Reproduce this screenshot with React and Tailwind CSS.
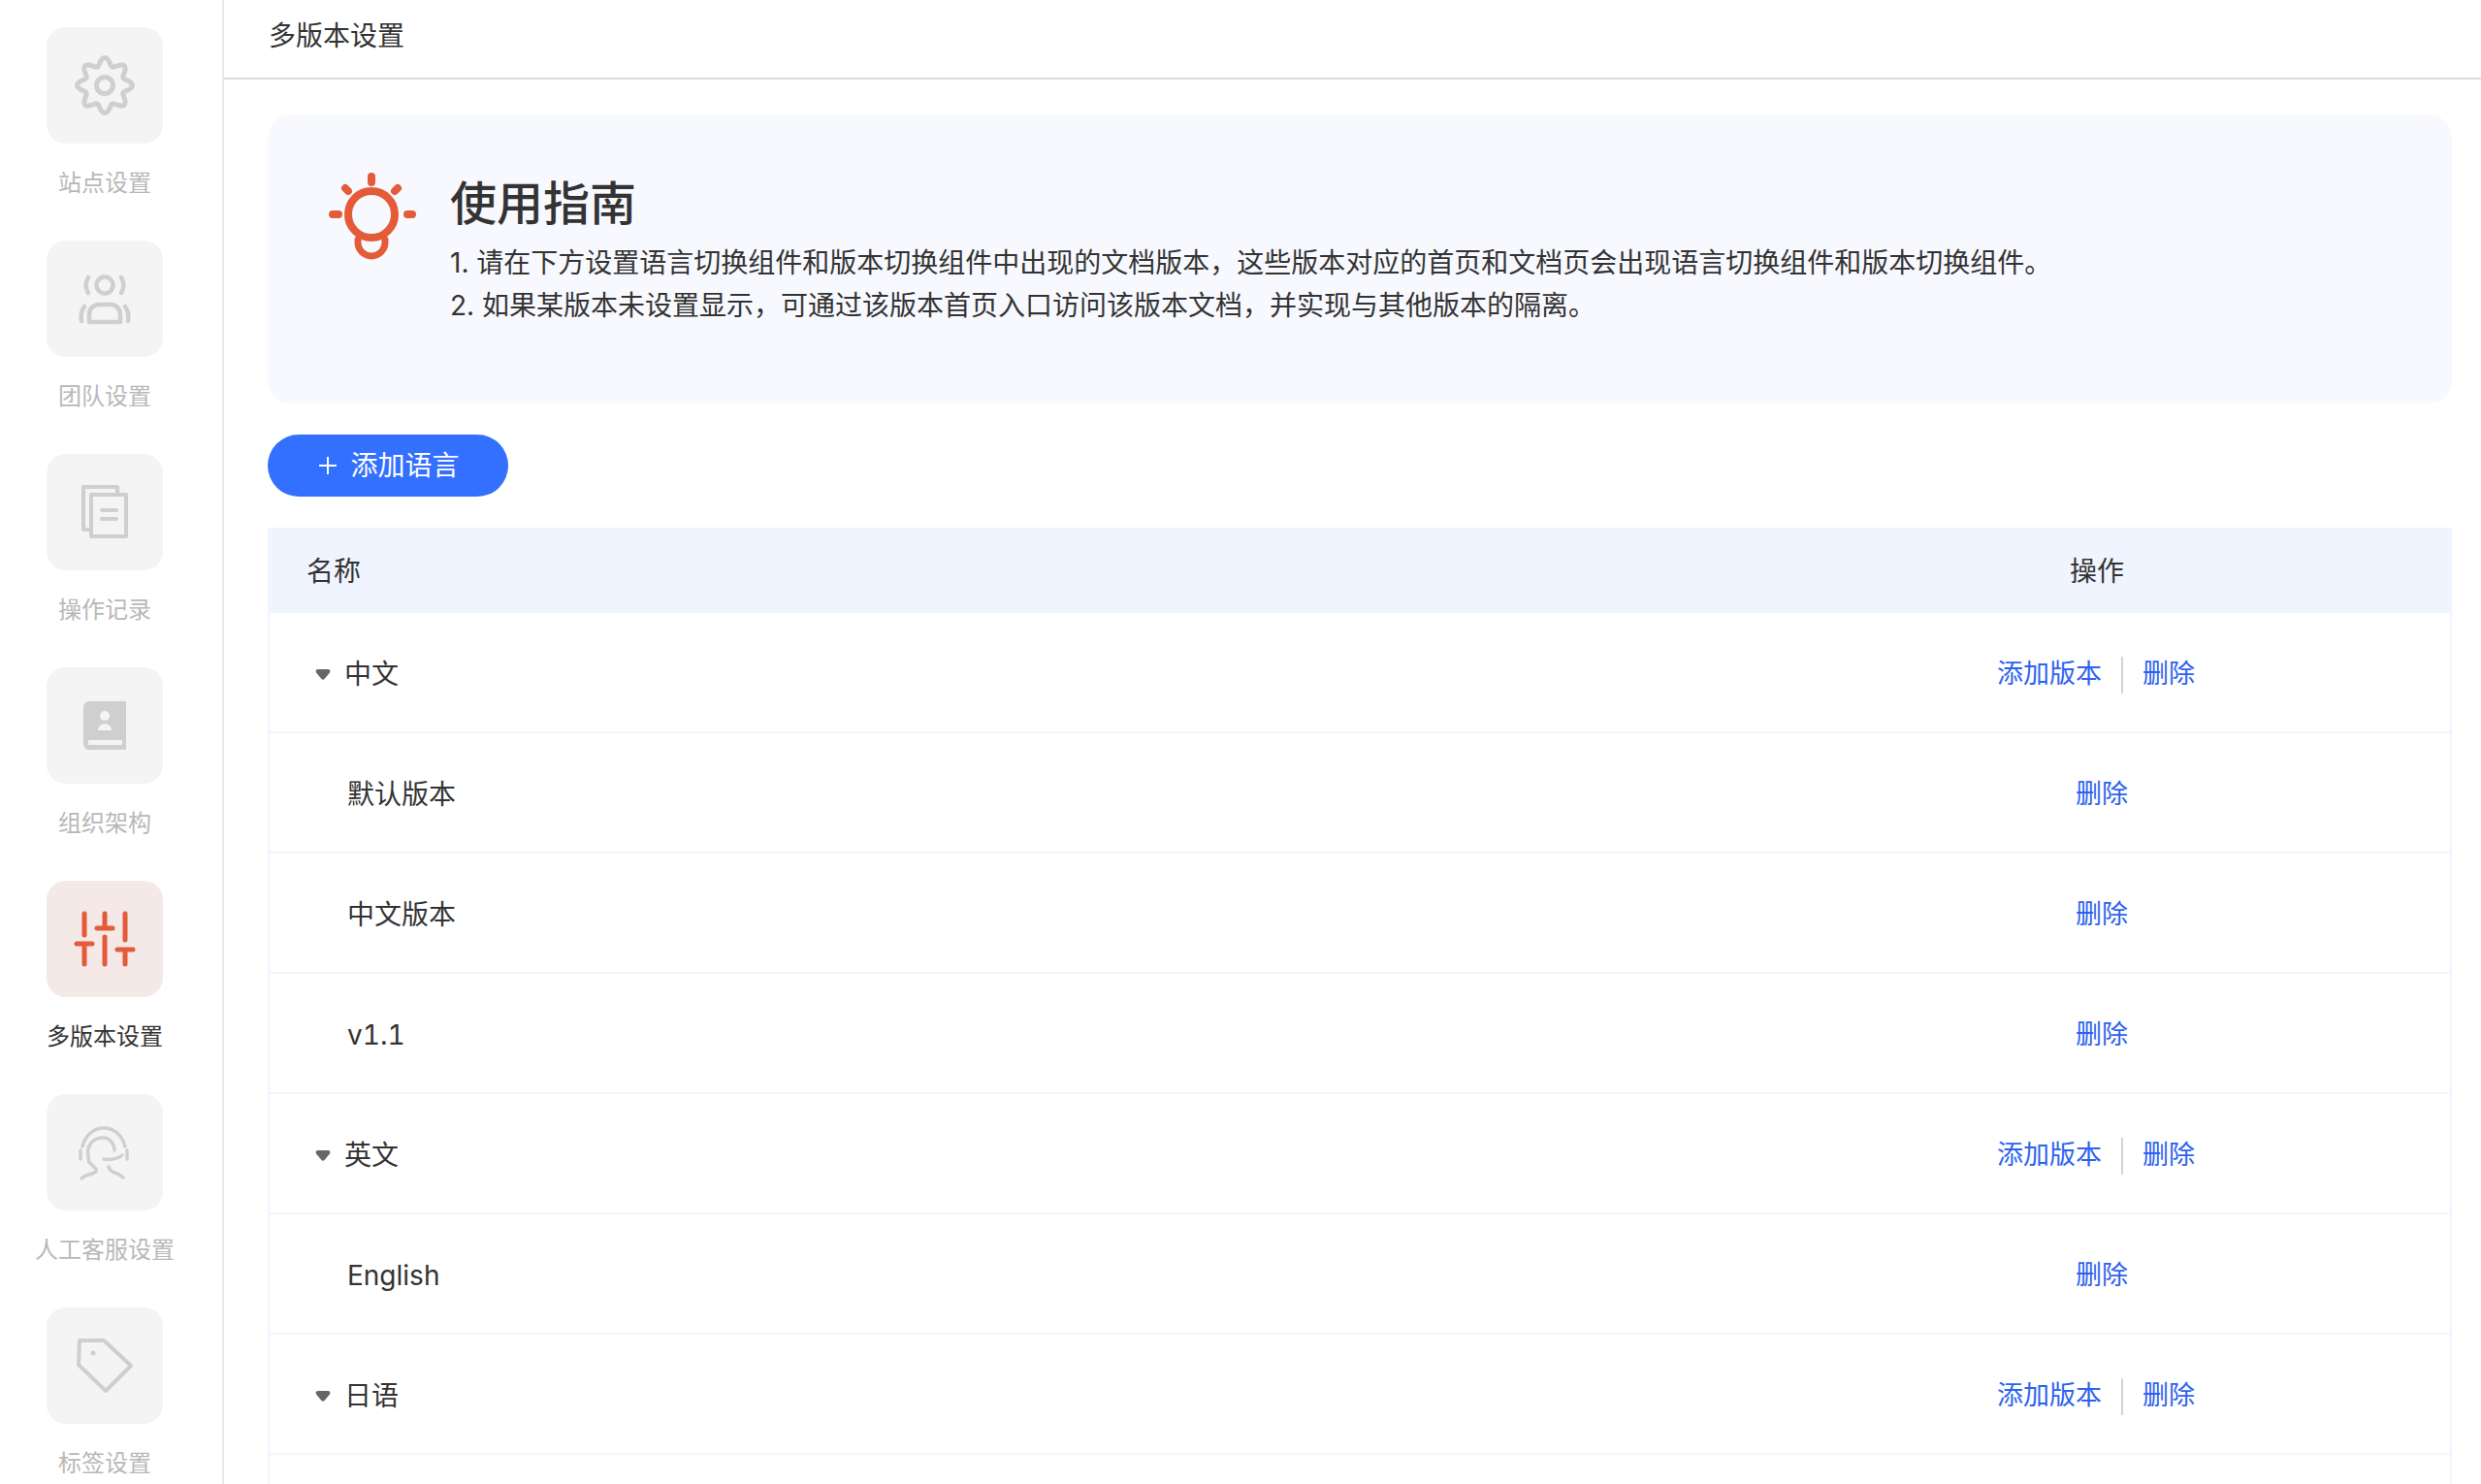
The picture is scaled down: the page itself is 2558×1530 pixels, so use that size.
import React from 'react'

const FONT = '[font-family:Inter,"Noto_Sans_CJK_SC",sans-serif]'

// 8-lobed outline for the settings gear
const gearPath = (() => {
  const pts = []
  for (let i = 0; i < 180; i++) {
    const a = (i / 180) * Math.PI * 2
    const r = 24.5 + 4 * Math.cos(8 * a)
    pts.push(`${(60 + r * Math.sin(a)).toFixed(2)} ${(60 - r * Math.cos(a)).toFixed(2)}`)
  }
  return `M${pts.join('L')}Z`
})()

const Gray = ({ children }) => (
  <svg width="120" height="120" viewBox="0 0 120 120" fill="none" stroke="#cfcfcf" strokeWidth="4" strokeLinecap="round" strokeLinejoin="round">
    {children}
  </svg>
)

const icons = {
  gear: (
    <Gray>
      <path d={gearPath} strokeWidth="5" />
      <circle cx="60" cy="60" r="8.5" strokeWidth="5" />
    </Gray>
  ),
  team: (
    <Gray>
      <circle cx="60" cy="46" r="8.5" strokeWidth="4.5" />
      <path d="M43 38c-3 5-3 11 0 16M77 38c3 5 3 11 0 16" strokeWidth="4.5" />
      <path d="M44 84V76c0-6 5-10 10-10h12c5 0 10 4 10 10v8z" strokeWidth="4.5" />
      <path d="M36 83c-1-6 0-11 3-15M84 83c1-6 0-11-3-15" strokeWidth="4.5" />
    </Gray>
  ),
  records: (
    <Gray>
      <path d="M45 78H38V34h35v7" strokeLinecap="butt" />
      <path d="M46 42h36v43H46z" />
      <path d="M57 58h15M57 67h15" />
    </Gray>
  ),
  org: (
    <svg width="120" height="120" viewBox="0 0 120 120">
      <path d="M44 35h38v50H44a6 6 0 0 1-6-6V41a6 6 0 0 1 6-6z" fill="#cfcfcf" />
      <circle cx="60" cy="50" r="5" fill="#f4f4f4" />
      <path d="M53 65c0-9 14-9 14 0z" fill="#f4f4f4" />
      <rect x="43" y="75" width="35" height="5" rx="1" fill="#f4f4f4" />
    </svg>
  ),
  sliders: (
    <svg width="120" height="120" viewBox="0 0 120 120" fill="none" stroke="#e35b38" strokeWidth="5" strokeLinecap="round">
      <path d="M39 34v22M31 65h16M39 65v21" />
      <path d="M60 34v15M52 49h16M60 58v28" />
      <path d="M81 34v27M73 71h16M81 71v15" />
    </svg>
  ),
  support: (
    <Gray>
      <path d="M37 54c3-12 12-19 22-19s19 7 22 19" strokeWidth="3.5" />
      <path d="M35 58v9M83 58v9" strokeWidth="3.5" />
      <path d="M44 70c-1-4-2-9-1-14 2-7 8-11 15-11 7 0 12 6 12 13" strokeWidth="3.5" />
      <path d="M59 67c7 1 14 0 19-4" strokeWidth="3.500" />
      <path d="M44 70c2 3 5 5 7 7 1 3-1 4-4 5-4 1-8 2-11 5" strokeWidth="3.5" />
      <path d="M64 75c1 3 3 5 6 6 4 1 7 3 9 5" strokeWidth="3.5" />
    </Gray>
  ),
  tag: (
    <Gray>
      <path d="M34 34h25l28 26-26 26-28-27z" />
      <circle cx="48" cy="47" r="2.5" fill="#cfcfcf" stroke="none" />
    </Gray>
  ),
}

const navItems = [
  { key: 'gear', label: '站点设置' },
  { key: 'team', label: '团队设置' },
  { key: 'records', label: '操作记录' },
  { key: 'org', label: '组织架构' },
  { key: 'sliders', label: '多版本设置', active: true },
  { key: 'support', label: '人工客服设置' },
  { key: 'tag', label: '标签设置' },
]

const rows = [
  { name: '中文', group: true },
  { name: '默认版本' },
  { name: '中文版本' },
  { name: 'v1.1' },
  { name: '英文', group: true },
  { name: 'English' },
  { name: '日语', group: true },
]

const Sidebar = () => (
  <aside className="flex h-full w-[231px] shrink-0 flex-col items-center gap-[40px] overflow-hidden border-r-2 border-[#e9e9ef] pt-[28px] pr-[13px]">
    {navItems.map((item) => (
      <div key={item.key} className="flex h-[180px] w-[180px] shrink-0 flex-col items-center">
        <div className={`h-[120px] w-[120px] rounded-[20px] ${item.active ? 'bg-[#f4e9e7]' : 'bg-[#f4f4f4]'}`}>
          {icons[item.key]}
        </div>
        <div className={`mt-[21px] whitespace-nowrap text-[24px] leading-[40px] ${item.active ? 'text-[#333]' : 'text-[#b8b8b8]'}`}>
          {item.label}
        </div>
      </div>
    ))}
  </aside>
)

const Guide = () => (
  <div className="flex h-[298px] shrink-0 rounded-[24px] bg-[#f8f9fe] pt-[54px] pl-[58px]">
    <svg width="100" height="100" viewBox="0 0 100 100" fill="none" stroke="#e35b38" strokeWidth="8" strokeLinecap="round" className="-mt-[1px] -ml-[1px] shrink-0">
      <circle cx="50" cy="50" r="24" />
      <path d="M36 76v3a14 14 0 0 0 28 0v-3" strokeWidth="7" />
      <path d="M50 11v6M10 50h6M87 50h5M23 23l3 3M77 23l-3 3" />
    </svg>
    <div className="ml-[31px] text-[#333]">
      <h2 className="text-[48px] leading-[76px] font-medium">使用指南</h2>
      <p className="pt-[1px] text-[28px] leading-[44px]">1. 请在下方设置语言切换组件和版本切换组件中出现的文档版本，这些版本对应的首页和文档页会出现语言切换组件和版本切换组件。</p>
      <p className="text-[28px] leading-[44px]">2. 如果某版本未设置显示，可通过该版本首页入口访问该版本文档，并实现与其他版本的隔离。</p>
    </div>
  </div>
)

const Row = ({ row }) => (
  <div className="flex h-[124px] shrink-0 items-center border-b-2 border-[#f2f5fd] pt-[3px] text-[28px] text-[#333] tabular-nums">
    <div className={`flex flex-1 items-center ${row.group ? 'pl-[47px]' : 'pl-[80px]'}`}>
      {row.group && (
        <svg width="16" height="12" viewBox="0 0 16 12" className="mr-[14px]">
          <path d="M3 1h10c2 0 3 1.500 2 3.500L9.500 11c-.8 1-2.200 1-3 0L1 4.500C0 2.500 1 1 3 1z" fill="#666" />
        </svg>
      )}
      {row.name}
    </div>
    <div className={`flex w-[480px] items-center pt-[2px] text-[27px] text-[#2d62f0] ${row.group ? 'pl-[13px]' : 'pl-[94px]'}`}>
      {row.group && <span>添加版本</span>}
      {row.group && <span className="mx-[20px] h-[38px] w-[2px] bg-[#d4d4d4]" />}
      <span>删除</span>
    </div>
  </div>
)

export default function App() {
  return (
    <div className={`flex h-[1530px] w-full overflow-hidden bg-white ${FONT}`}>
      <Sidebar />
      <main className="flex min-w-0 flex-1 flex-col">
        <header className="h-[82px] shrink-0 border-b-2 border-[#dadada] pl-[46px] text-[28px] leading-[74px] text-[#333]">多版本设置</header>
        <div className="flex min-h-0 flex-1 flex-col overflow-hidden pt-[36px] pr-[30px] pl-[45px]">
          <Guide />
          <button className="mt-[32px] flex h-[64px] w-[248px] shrink-0 items-center justify-center rounded-full bg-[#3370ff] pl-[2px] text-[28px] text-white">
            <svg width="20" height="20" viewBox="0 0 20 20" stroke="#fff" strokeWidth="2" className="mr-[13px]">
              <path d="M10 1v18M1 10h18" />
            </svg>
            添加语言
          </button>
          <div className="mt-[32px] flex flex-col border-x-2 border-[#f0f4fe]">
            <div className="-mx-[2px] flex h-[88px] shrink-0 items-center bg-[#f0f4fe] pt-[2px] text-[28px] text-[#333]">
              <div className="flex-1 pl-[40px]">名称</div>
              <div className="w-[482px] pl-[88px]">操作</div>
            </div>
            {rows.map((row, i) => <Row key={i} row={row} />)}
            {/* next row starts right at the fold, only its edge shows */}
            <div className="h-[124px] shrink-0" />
          </div>
        </div>
      </main>
    </div>
  )
}
